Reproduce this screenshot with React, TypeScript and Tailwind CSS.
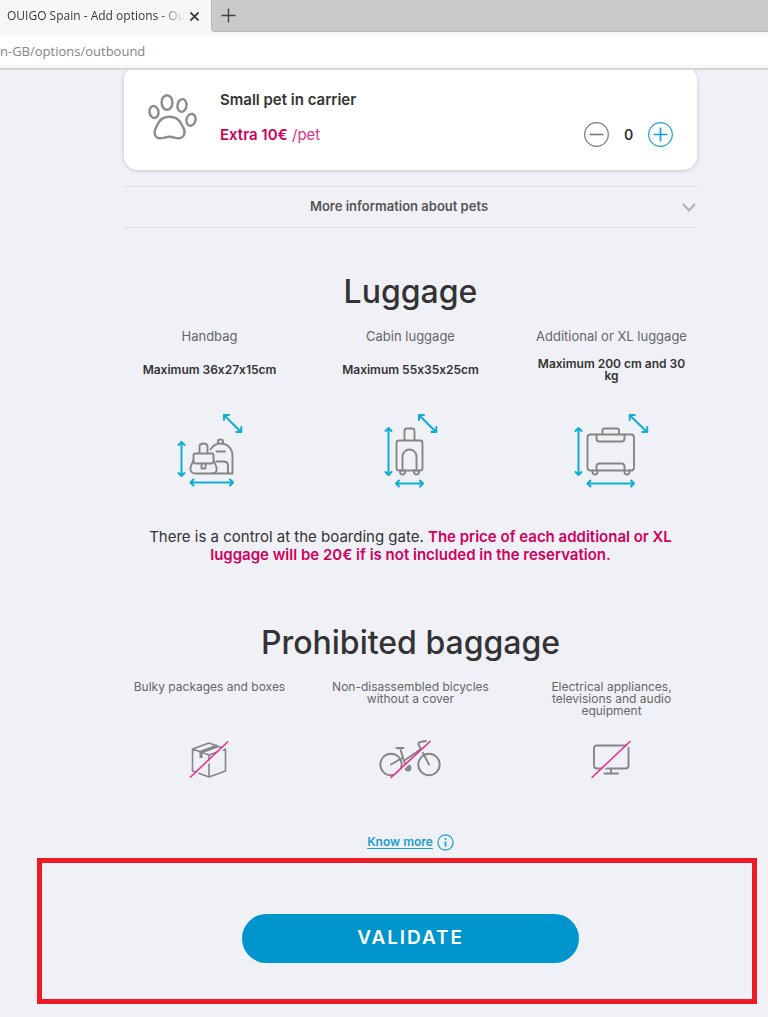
import { useState } from "react";
import type { ReactNode } from "react";

const GREY = "#868686";
const CYAN = "#0eaed6";
const PINK = "#ec3192";

function PawIcon() {
  return (
    <svg width="50" height="48" viewBox="147 93 50 48" fill="none" stroke="#8c8c8c" strokeWidth="2.4" aria-hidden="true">
      <ellipse cx="167" cy="102.5" rx="5.4" ry="7.3" />
      <ellipse cx="182" cy="105.5" rx="4.5" ry="6.4" transform="rotate(8 182 105.5)" />
      <ellipse cx="154" cy="112" rx="4.5" ry="6" transform="rotate(-10 154 112)" />
      <ellipse cx="191" cy="119.8" rx="4.5" ry="6" transform="rotate(14 191 119.8)" />
      <path d="M158.500 122.500C161 118.500 164.500 116.700 169.500 116.700S178 118.500 180.500 122.500L183.200 127.500C186 132 184.500 138.300 178 138.300C175 138.300 173.500 136.800 169.500 136.800S164 138.300 160.500 138.300C154.500 138.300 153.500 132.500 155.800 128Z" />
    </svg>
  );
}

function LuggageFrame({ viewBox, arrows, children }: { viewBox: string; arrows: string; children: ReactNode }) {
  return (
    <svg width="80" height="78" viewBox={viewBox} fill="none" strokeLinecap="round" strokeLinejoin="round" aria-hidden="true">
      <g stroke={GREY} strokeWidth="1.9">{children}</g>
      <path d={arrows} stroke={CYAN} strokeWidth="2" />
    </svg>
  );
}

function HandbagIcon() {
  return (
    <LuggageFrame
      viewBox="170 412 80 78"
      arrows="M181.500 442.500V475.500M178.500 445L181.500 442L184.500 445M178.500 473L181.500 476L184.500 473M191 482.500H232.500M193.500 479.500L190.500 482.500L193.500 485.500M230 479.500L233 482.500L230 485.500M224.500 415.500L241 432M224 420V415H229M241.300 427V432H236.300"
    >
      <path d="M210.500 449.500C213 445.500 216 443.500 220.500 443.500C227.500 443.500 232.500 448.500 232.500 456V473.500H195C191.500 473.500 190 471 190.500 467.500L193 461" />
      <path d="M218 443V441Q218 439.500 220.500 439.500T223 441V443M216.500 451.500H225" />
      <path d="M199.500 453V447Q199.500 443.500 203.500 443.500T207.500 447V453" />
      <path d="M195 453.500H212Q213.500 453.500 213.500 455V461Q213.500 463.500 211 463.500H196Q193.500 463.500 193.500 461V455Q193.500 453.500 195 453.500Z" />
      <path d="M214 461L216.500 467.500Q217.500 473 212.500 473.500M201.500 463.500V468.500H205.500V463.500M216.500 461.500H223.500Q228 461.500 228 466V473" />
    </LuggageFrame>
  );
}

function CabinIcon() {
  return (
    <LuggageFrame
      viewBox="371 412 80 78"
      arrows="M388.500 428.500V474.500M385.500 431L388.500 428L391.500 431M385.500 472L388.500 475L391.500 472M396.500 483.500H422.500M399 480.500L396 483.500L399 486.500M420 480.500L423 483.500L420 486.500M419.500 415.500L436 432M419 420V415H424M436.300 427V432H431.300"
    >
      <rect x="396.500" y="440.500" width="26" height="30" rx="2.500" />
      <path d="M404.500 440V431Q404.500 428.500 407 428.500H412Q414.500 428.500 414.500 431V440M402.500 470.500V456.500A7 7 0 0 1 416.500 456.500V470.500M400 470.500V472A2.500 2.500 0 0 0 405 472V470.500M414 470.500V472A2.500 2.500 0 0 0 419 472V470.500" />
    </LuggageFrame>
  );
}

function SuitcaseIcon() {
  return (
    <LuggageFrame
      viewBox="572 412 80 78"
      arrows="M578.500 428.500V474.500M575.500 431L578.500 428L581.500 431M575.500 472L578.500 475L581.500 472M588 483.500H633.500M590.500 480.500L587.500 483.500L590.500 486.500M631 480.500L634 483.500L631 486.500M630 415.500L647 432M629.700 420V415H634.700M647.200 427V432H642.200"
    >
      <rect x="587.500" y="434.500" width="46.500" height="36" rx="3" />
      <path d="M602.500 434V430.500Q602.500 428.500 604.500 428.500H617Q619 428.500 619 430.500V434M596.500 434.500V438.500Q596.500 441.500 599.500 441.500H621.500Q624.500 441.500 624.500 438.500V434.500M596.500 470.500V466.500Q596.500 463.500 599.500 463.500H621.500Q624.500 463.500 624.500 466.500V470.500M592.500 470.500V472A2.500 2.500 0 0 0 597.500 472V470.500M624.500 470.500V472A2.500 2.500 0 0 0 629.500 472V470.500" />
    </LuggageFrame>
  );
}

function BoxIcon() {
  return (
    <svg width="70" height="42" viewBox="175 739 70 42" fill="none" stroke={GREY} strokeWidth="1.6" strokeLinejoin="round" aria-hidden="true">
      <path d="M192.500 749L209 743L225.500 749V771L209 777L192.500 771ZM192.500 749L209 755L225.500 749M209 755V777" />
      <path d="M201 758V752L217.500 746" strokeWidth="3" />
      <path d="M191 779L229 743" stroke="#f0f1f6" strokeWidth="2" />
      <path d="M190 777.500L228 741.500" stroke={PINK} strokeWidth="1.600" />
    </svg>
  );
}

function BicycleIcon() {
  return (
    <svg width="70" height="42" viewBox="376 739 70 42" fill="none" stroke={GREY} strokeWidth="1.9" strokeLinecap="round" strokeLinejoin="round" aria-hidden="true">
      <circle cx="391" cy="764.500" r="10.700" />
      <circle cx="429" cy="764.500" r="10.700" />
      <path d="M396.500 748H403.500M400 748L405 764M391 764.500L402 758M405 760L421 749M429 764.500L418.500 744.500Q418 742.500 420.500 742L426 741" />
      <circle cx="408" cy="768" r="2.500" fill={GREY} />
      <path d="M392 779L431 743" stroke="#f0f1f6" strokeWidth="2" />
      <path d="M391 777.500L430 741.500" stroke={PINK} strokeWidth="1.700" />
    </svg>
  );
}

function ScreenIcon() {
  return (
    <svg width="70" height="42" viewBox="577 739 70 42" fill="none" stroke={GREY} strokeWidth="1.9" strokeLinecap="round" aria-hidden="true">
      <rect x="594" y="745.500" width="34.500" height="23" rx="3" />
      <path d="M611 769V773M604.500 773.500H618" />
      <path d="M593 779L631 743" stroke="#f0f1f6" strokeWidth="2" />
      <path d="M592 777.500L630 741.500" stroke={PINK} strokeWidth="1.600" />
    </svg>
  );
}

const luggage = [
  { name: "Handbag", max: "Maximum 36x27x15cm", icon: <HandbagIcon /> },
  { name: "Cabin luggage", max: "Maximum 55x35x25cm", icon: <CabinIcon /> },
  { name: "Additional or XL luggage", max: "Maximum 200 cm and 30 kg", icon: <SuitcaseIcon /> },
];

const prohibited = [
  { name: "Bulky packages and boxes", icon: <BoxIcon /> },
  { name: "Non-disassembled bicycles without a cover", icon: <BicycleIcon /> },
  { name: "Electrical appliances, televisions and audio equipment", icon: <ScreenIcon /> },
];

function BrowserBar() {
  return (
    <header className="border-b-2 border-[#d6d6d7] bg-[#f7f7f7] font-['Open_Sans','Noto_Sans',sans-serif]">
      <div className="flex h-8 items-stretch">
        <div className="flex w-[211px] items-center bg-[#f7f7f7] pl-[7px]">
          <span className="w-[179px] bg-linear-to-r from-[#333333] from-85% to-transparent bg-clip-text text-xs whitespace-nowrap text-transparent">
            OUIGO Spain - Add options - Ou
          </span>
          <button type="button" aria-label="Close tab" className="flex h-4 w-4 items-center justify-center">
            <svg width="9" height="9" viewBox="0 0 9 9" stroke="#333333" strokeWidth="1.700"><path d="M.5 .5L8.500 8.500M8.500 .5L.5 8.500" /></svg>
          </button>
        </div>
        <div className="flex flex-1 items-center rounded-bl-sm border-b border-l border-[#b8b8b8] bg-[#cacaca] pl-[9px]">
          <button type="button" aria-label="New tab">
            <svg width="15" height="15" viewBox="0 0 15 15" stroke="#404040" strokeWidth="1.400"><path d="M7.500 .5V14.500M.5 7.500H14.500" /></svg>
          </button>
        </div>
      </div>
      <div className="mt-1 mb-[3px] bg-white">
        <input
          aria-label="Address"
          defaultValue="n-GB/options/outbound"
          className="block h-[29px] w-full bg-transparent text-[13px] text-[#858585] outline-none"
        />
      </div>
    </header>
  );
}

export default function App() {
  const [pets, setPets] = useState(0);
  return (
    <div className="min-h-screen bg-[#f0f1f6] font-['Inter','Liberation_Sans',sans-serif] text-[#333333] [font-feature-settings:'calt'_0]">
      <BrowserBar />
      <main className="overflow-hidden pb-[13px]">
        <div className="pr-[71px] pl-[124px]">
          <section className="-mt-1 flex h-[104px] rounded-[14px] bg-white pr-6 pl-[23px] shadow-[0_1px_4px_rgba(0,0,0,0.18)]">
            <div className="pt-[27px]"><PawIcon /></div>
            <div className="ml-[23px] flex-1 pt-6">
              <h2 className="text-[15px] leading-5 font-semibold">Small pet in carrier</h2>
              <p className="mt-[15px] text-[15px] leading-5 text-[#e6308a]">
                <strong className="font-semibold text-[#d1005d]">Extra 10€</strong> /pet
              </p>
            </div>
            <div className="mb-[23px] flex h-[25px] items-center self-end">
              <button type="button" aria-label="Remove a pet" onClick={() => setPets(Math.max(0, pets - 1))}>
                <svg width="25" height="25" viewBox="0 0 25 25" fill="none" stroke="#777777"><circle cx="12.500" cy="12.500" r="11.800" strokeWidth="1.200" /><path d="M5.500 12.500H19.500" strokeWidth="1.600" /></svg>
              </button>
              <output className="w-[39px] text-center text-sm font-semibold">{pets}</output>
              <button type="button" aria-label="Add a pet" onClick={() => setPets(pets + 1)}>
                <svg width="25" height="25" viewBox="0 0 25 25" fill="none" stroke="#1b9fd0"><circle cx="12.500" cy="12.500" r="11.800" strokeWidth="1.200" /><path d="M5.500 12.500H19.500M12.500 5.500V19.500" strokeWidth="1.700" /></svg>
              </button>
            </div>
          </section>

          <button type="button" className="mt-4 flex h-[42px] w-full items-center gap-2 border-y border-[#dedfe3] text-[13px] font-semibold text-[#555555]">
            <span className="flex-1 text-center">More information about pets</span>
            <svg className="mr-px" width="14" height="9" viewBox="0 0 14 9" fill="none" stroke="#b3b3b6" strokeWidth="1.900"><path d="M1 1L7 7.500L13 1" /></svg>
          </button>

          <section className="mt-11 text-center">
            <h2 className="text-[32px] leading-10 font-medium">Luggage</h2>
            <div className="mt-[18px] grid grid-cols-3 gap-[30px]">
              {luggage.map((item) => (
                <div key={item.name} className="flex flex-col items-center">
                  <h3 className="text-[13px] leading-3 whitespace-nowrap text-[#666666]">{item.name}</h3>
                  <p className="mt-4 flex h-6 max-w-[160px] items-center text-xs leading-3 font-semibold">{item.max}</p>
                  <div className="mt-[30px]">{item.icon}</div>
                </div>
              ))}
            </div>
            <p className="mt-[38px] px-6 text-[15px] leading-[18px]">
              There is a control at the boarding gate. <strong className="font-semibold text-[#d1005d]">The price of each additional or XL luggage will be 20€ if is not included in the reservation.</strong>
            </p>
          </section>

          <section className="mt-[59px] text-center">
            <h2 className="text-[32px] leading-10 font-medium">Prohibited baggage</h2>
            <div className="mt-[18px] grid grid-cols-3 gap-[30px]">
              {prohibited.map((item) => (
                <div key={item.name} className="flex flex-col items-center">
                  <h3 className="h-9 text-xs leading-3 text-[#666666]">{item.name}</h3>
                  <div className="mt-[22px]">{item.icon}</div>
                </div>
              ))}
            </div>
            <div className="mt-[53px] flex h-4 items-center justify-center gap-1 text-[#1b9fd0]">
              <a href="#baggage" className="text-xs font-semibold underline underline-offset-2">Know more</a>
              <svg width="17" height="17" viewBox="0 0 17 17" fill="none" stroke="currentColor" aria-hidden="true"><circle cx="8.500" cy="8.500" r="7.600" strokeWidth="1.200" /><path d="M8.500 7.500V12.500M8.500 4V5.800" strokeWidth="1.700" /></svg>
            </div>
          </section>
        </div>

        <div className="mt-2 mr-[11px] ml-[37px] border-[5px] border-[#ed1c24] pt-[51px] pr-[55px] pb-9 pl-[82px]">
          <button type="button" className="mx-auto block h-[49px] w-full max-w-[337px] rounded-full bg-[#0095cc] text-[19px] font-semibold tracking-widest text-white">
            VALIDATE
          </button>
        </div>
      </main>
    </div>
  );
}
